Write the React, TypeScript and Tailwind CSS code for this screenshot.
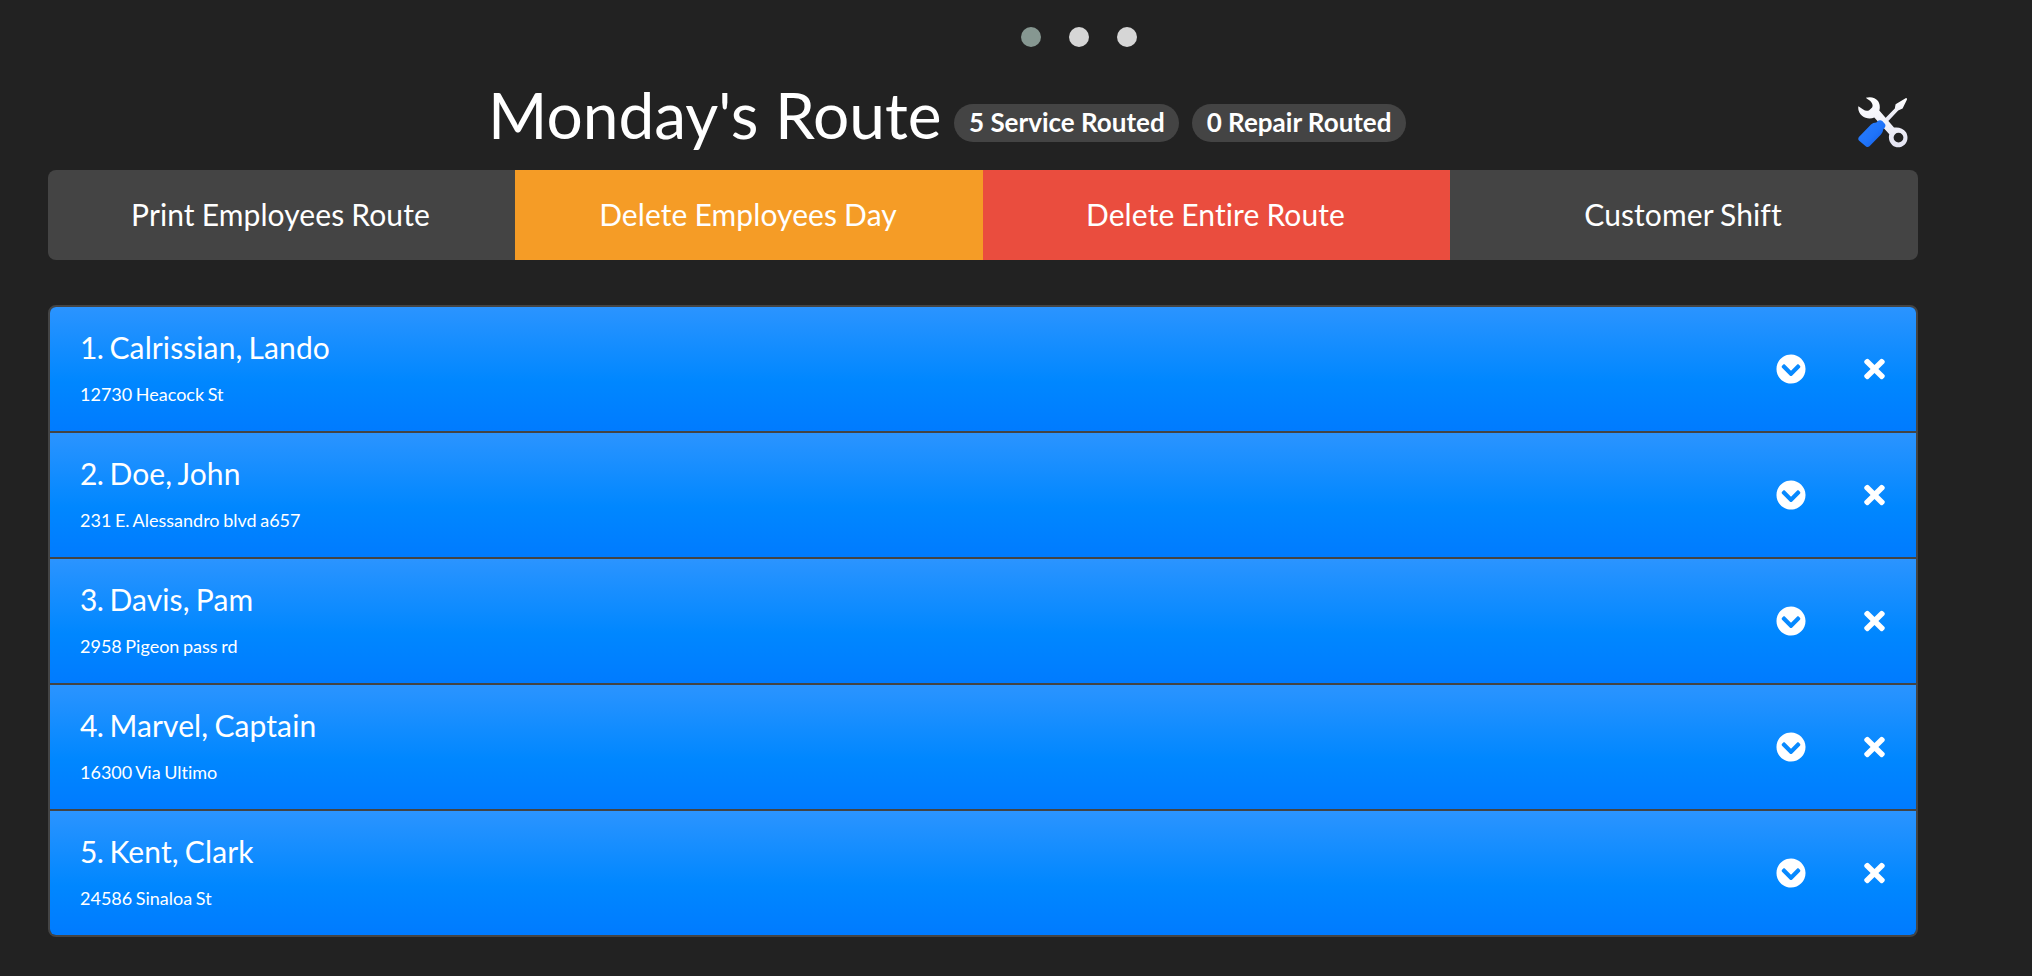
// images
import { FaChevronCircleDown, FaTimes } from "react-icons/fa";

type Customer = { name: string; address: string };

// constants
const customers: Customer[] = [
  { name: "Calrissian, Lando", address: "12730 Heacock St" },
  { name: "Doe, John", address: "231 E. Alessandro blvd a657" },
  { name: "Davis, Pam", address: "2958 Pigeon pass rd" },
  { name: "Marvel, Captain", address: "16300 Via Ultimo" },
  { name: "Kent, Clark", address: "24586 Sinaloa St" },
];

const actions = [
  { label: "Print Employees Route", color: "bg-[#444444]" },
  { label: "Delete Employees Day", color: "bg-[#f59c26]" },
  { label: "Delete Entire Route", color: "bg-[#ea4d3e]" },
  { label: "Customer Shift", color: "bg-[#444444]" },
];

const badges = ["5 Service Routed", "0 Repair Routed"];

const dots = ["bg-[#869791]", "bg-[#d6d6d6]", "bg-[#d6d6d6]"];

function ToolsIcon() {
  return (
    <svg width="50" height="51" viewBox="0 0 50 51">
      <defs>
        <linearGradient id="metal" x1="0" y1="0" x2="0" y2="1">
          <stop offset="0" stopColor="#ffffff" />
          <stop offset="1" stopColor="#e4e4f2" />
        </linearGradient>
        <linearGradient id="handle" x1="0" y1="0" x2="1" y2="1">
          <stop offset="0" stopColor="#2b7dfb" />
          <stop offset="0.55" stopColor="#1f74fa" />
          <stop offset="1" stopColor="#1457dc" />
        </linearGradient>
      </defs>
      {/* screwdriver blade */}
      <path d="M25 23.5 L36.8 11.5 L37.6 7.2 L47.6 1.2 Q49 0.8 49 2.4 L44.6 11.4 L40.2 13.6 L28 26.5 Z" fill="url(#metal)" />
      {/* wrench */}
      <path
        d="M7.8 0.8 C12 -0.7 17.5 0.3 20 4 C22 7.2 22.2 10.5 21.3 13.6 L36 30.6 C40.5 29.8 45.5 31.4 48 35.3 C50.3 39.3 50 44.5 46.6 47.7 C43 51 37.8 51 34.4 48.2 C31 45.2 30.3 41 31.3 37.2 L16.3 20.6 C12.5 22.2 7.5 21.8 4 18.8 C0.8 16 -0.2 12.2 0.4 9.2 L5.2 12.6 C7 14 9.4 14.2 11.2 13.3 L14.1 10.6 C15 8.8 14.6 6.9 13.5 5.4 C12.2 3.6 9.8 2.4 7.8 0.8 Z M40.5 35.7 A4.9 4.9 0 1 0 40.5 45.5 A4.9 4.9 0 1 0 40.5 35.7 Z"
        fill="url(#metal)"
        fillRule="evenodd"
      />
      {/* screwdriver handle */}
      <path d="M20.5 23.6 Q22.5 22.6 24.3 24 L27 27 Q28 28.8 26.8 30.5 L25.2 32.4 Q25 35 23 37.6 L11.5 49.3 Q9.8 50.6 8 49.4 L0.9 43.6 Q-0.4 42 0.9 40 L13 27.6 Q15 25.7 18.3 25.6 Z" fill="url(#handle)" />
    </svg>
  );
}

function RouteItem({ customer, index }: { customer: Customer; index: number }) {
  return (
    <li className="flex h-[126px] items-center justify-between border-b-2 border-[#444444] bg-[linear-gradient(#2b94ff,#0087ff_60%,#007bff)] pl-[30px] pr-[31px] last:h-[124px] last:border-b-0">
      <div className="-mt-[5px]">
        <div className="text-[30px] leading-[45px] tracking-[0.1px] [word-spacing:-1.6px]">
          <span className="tracking-[-0.6px]">{index + 1}.</span> {customer.name}
        </div>
        <div className="mt-[11px] text-[18px] leading-[27px] [word-spacing:-1px]">{customer.address}</div>
      </div>
      <div className="flex items-center gap-[58px]">
        <FaChevronCircleDown className="size-[30px]" />
        <FaTimes className="h-[30px] w-[21px]" />
      </div>
    </li>
  );
}

export default function App() {
  return (
    <div className="h-[976px] w-full overflow-hidden bg-[#222222] font-[Lato,sans-serif] text-white [font-variant-ligatures:none]">
      {/*--- carousel dots ---*/}
      <div className="ml-[1021px] flex gap-7 pt-[27px]">
        {dots.map((color, i) => (
          <span key={i} className={`size-5 rounded-full ${color}`} />
        ))}
      </div>
      <main className="ml-12 w-[1870px]">
        {/*--- heading ---*/}
        <header className="flex h-[123px] items-start justify-between pt-[29px]">
          <div className="ml-[440px] flex items-start gap-[13px]">
            <h1 className="text-[64px] leading-[77px]">Monday's Route</h1>
            {badges.map((badge) => (
              <span key={badge} className="mt-[28px] rounded-full bg-[#444444] px-[14.5px] pt-[5px] pb-[7px] text-[26px] leading-[26px] font-bold">
                {badge}
              </span>
            ))}
          </div>
          <div className="mt-[21px] mr-[10px]">
            <ToolsIcon />
          </div>
        </header>
        {/*--- route actions ---*/}
        <div className="grid h-[90px] grid-cols-[467px_468px_467px_468px] overflow-hidden rounded-lg">
          {actions.map(({ label, color }) => (
            <button key={label} className={`pr-[2px] pb-[2px] text-[30px] leading-[45px] tracking-[0.1px] [word-spacing:-0.8px] ${color}`}>
              {label}
            </button>
          ))}
        </div>
        {/*--- routed customers ---*/}
        <ul className="mt-[45px] overflow-hidden rounded-lg border-2 border-[#444444]">
          {customers.map((customer, i) => (
            <RouteItem key={customer.name} customer={customer} index={i} />
          ))}
        </ul>
      </main>
    </div>
  );
}
